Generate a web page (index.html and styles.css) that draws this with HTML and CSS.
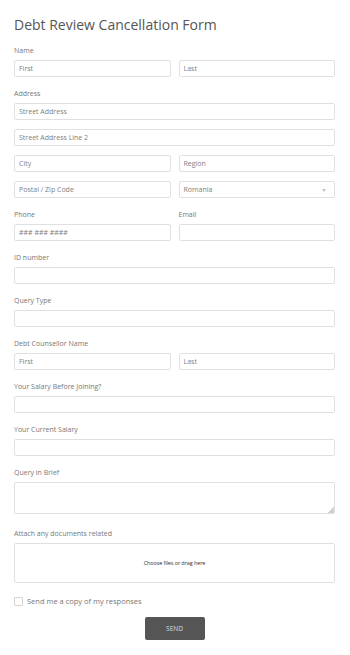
FILE: index.html
```html
<!DOCTYPE html>
<html lang="en">
<head>
<meta charset="UTF-8">
<meta name="viewport" content="width=device-width, initial-scale=1.0">
<title>Debt Review Cancellation Form</title>
<link rel="stylesheet" href="styles.css">
</head>
<body>

<form class="form">
  <h1 class="title">Debt Review Cancellation Form</h1>

  <div class="field">
    <label class="label">Name</label>
    <div class="row">
      <input type="text" class="input" placeholder="First">
      <input type="text" class="input" placeholder="Last">
    </div>
  </div>

  <div class="field">
    <label class="label">Address</label>
    <div class="stack">
      <input type="text" class="input" placeholder="Street Address">
      <input type="text" class="input" placeholder="Street Address Line 2">
      <div class="row">
        <input type="text" class="input" placeholder="City">
        <input type="text" class="input" placeholder="Region">
      </div>
      <div class="row">
        <input type="text" class="input" placeholder="Postal / Zip Code">
        <div class="select">Romania<span class="caret"></span></div>
      </div>
    </div>
  </div>

  <div class="field row">
    <div>
      <label class="label">Phone</label>
      <input type="text" class="input" placeholder="### ### ####">
    </div>
    <div>
      <label class="label">Email</label>
      <input type="text" class="input">
    </div>
  </div>

  <div class="field">
    <label class="label">ID number</label>
    <input type="text" class="input">
  </div>

  <div class="field">
    <label class="label">Query Type</label>
    <input type="text" class="input">
  </div>

  <div class="field">
    <label class="label">Debt Counsellor Name</label>
    <div class="row">
      <input type="text" class="input" placeholder="First">
      <input type="text" class="input" placeholder="Last">
    </div>
  </div>

  <div class="field">
    <label class="label">Your Salary Before Joining?</label>
    <input type="text" class="input">
  </div>

  <div class="field">
    <label class="label">Your Current Salary</label>
    <input type="text" class="input">
  </div>

  <div class="field field-wide">
    <label class="label">Query in Brief</label>
    <textarea class="input textarea"></textarea>
  </div>

  <div class="field">
    <label class="label">Attach any documents related</label>
    <div class="dropzone">Choose files or drag here</div>
  </div>

  <label class="copy">
    <span class="checkbox"></span>
    Send me a copy of my responses
  </label>

  <div class="actions">
    <button type="button" class="send">SEND</button>
  </div>
</form>

</body>
</html>
```

FILE: styles.css
```css
body {
  font-family: "Open Sans", Arial, sans-serif;
  margin: 0;
  background: #fff;
  color: #666;
}
.form {
  padding: 15px 15px 14px 14px;
}
.title {
  font-size: 14px;
  font-weight: 400;
  color: #555;
  margin: 0 0 11px;
  line-height: 20px;
}
.field {
  margin-bottom: 12px;
}
.field-wide {
  margin-bottom: 15px;
}
.label {
  display: block;
  font-size: 7px;
  line-height: 10px;
  margin-bottom: 4px;
  color: #777;
}
.row {
  display: grid;
  grid-template-columns: 1fr 1fr;
  gap: 8px;
}
.stack {
  display: grid;
  gap: 9px;
}
.input {
  display: block;
  box-sizing: border-box;
  width: 100%;
  height: 17px;
  margin: 0;
  padding: 0 4px;
  font-family: inherit;
  font-size: 7px;
  color: #777;
  border: 1px solid #e0e0e0;
  border-radius: 2px;
  background: #fff;
  outline: none;
}
.input::placeholder {
  color: #808080;
}
.textarea {
  height: 32px;
  resize: vertical;
}
.textarea::-webkit-resizer {
  background: linear-gradient(135deg, transparent 80%, #d0d0d0 80%);
}
.select {
  position: relative;
  box-sizing: border-box;
  height: 17px;
  padding: 0 4px;
  font-size: 7px;
  line-height: 15px;
  color: #808080;
  border: 1px solid #e0e0e0;
  border-radius: 2px;
}
.caret {
  position: absolute;
  right: 8px;
  top: 7px;
  border-left: 2.5px solid transparent;
  border-right: 2.5px solid transparent;
  border-top: 3px solid #c4c4c4;
}
.dropzone {
  box-sizing: border-box;
  height: 40px;
  border: 1px solid #e0e0e0;
  border-radius: 2px;
  display: flex;
  align-items: center;
  justify-content: center;
  font-size: 5.5px;
  color: #333;
  letter-spacing: -0.1px;
}
.copy {
  display: flex;
  align-items: center;
  gap: 4px;
  font-size: 7.5px;
  color: #777;
  margin-top: 13px;
}
.checkbox {
  width: 7px;
  height: 7px;
  border: 1px solid #d4d4d4;
  border-radius: 1px;
}
.actions {
  display: flex;
  justify-content: center;
  margin-top: 11px;
}
.send {
  width: 60px;
  height: 23px;
  border: 0;
  border-radius: 2px;
  background: #555;
  color: #ddd;
  font-family: inherit;
  font-size: 6.5px;
  cursor: pointer;
}
```
